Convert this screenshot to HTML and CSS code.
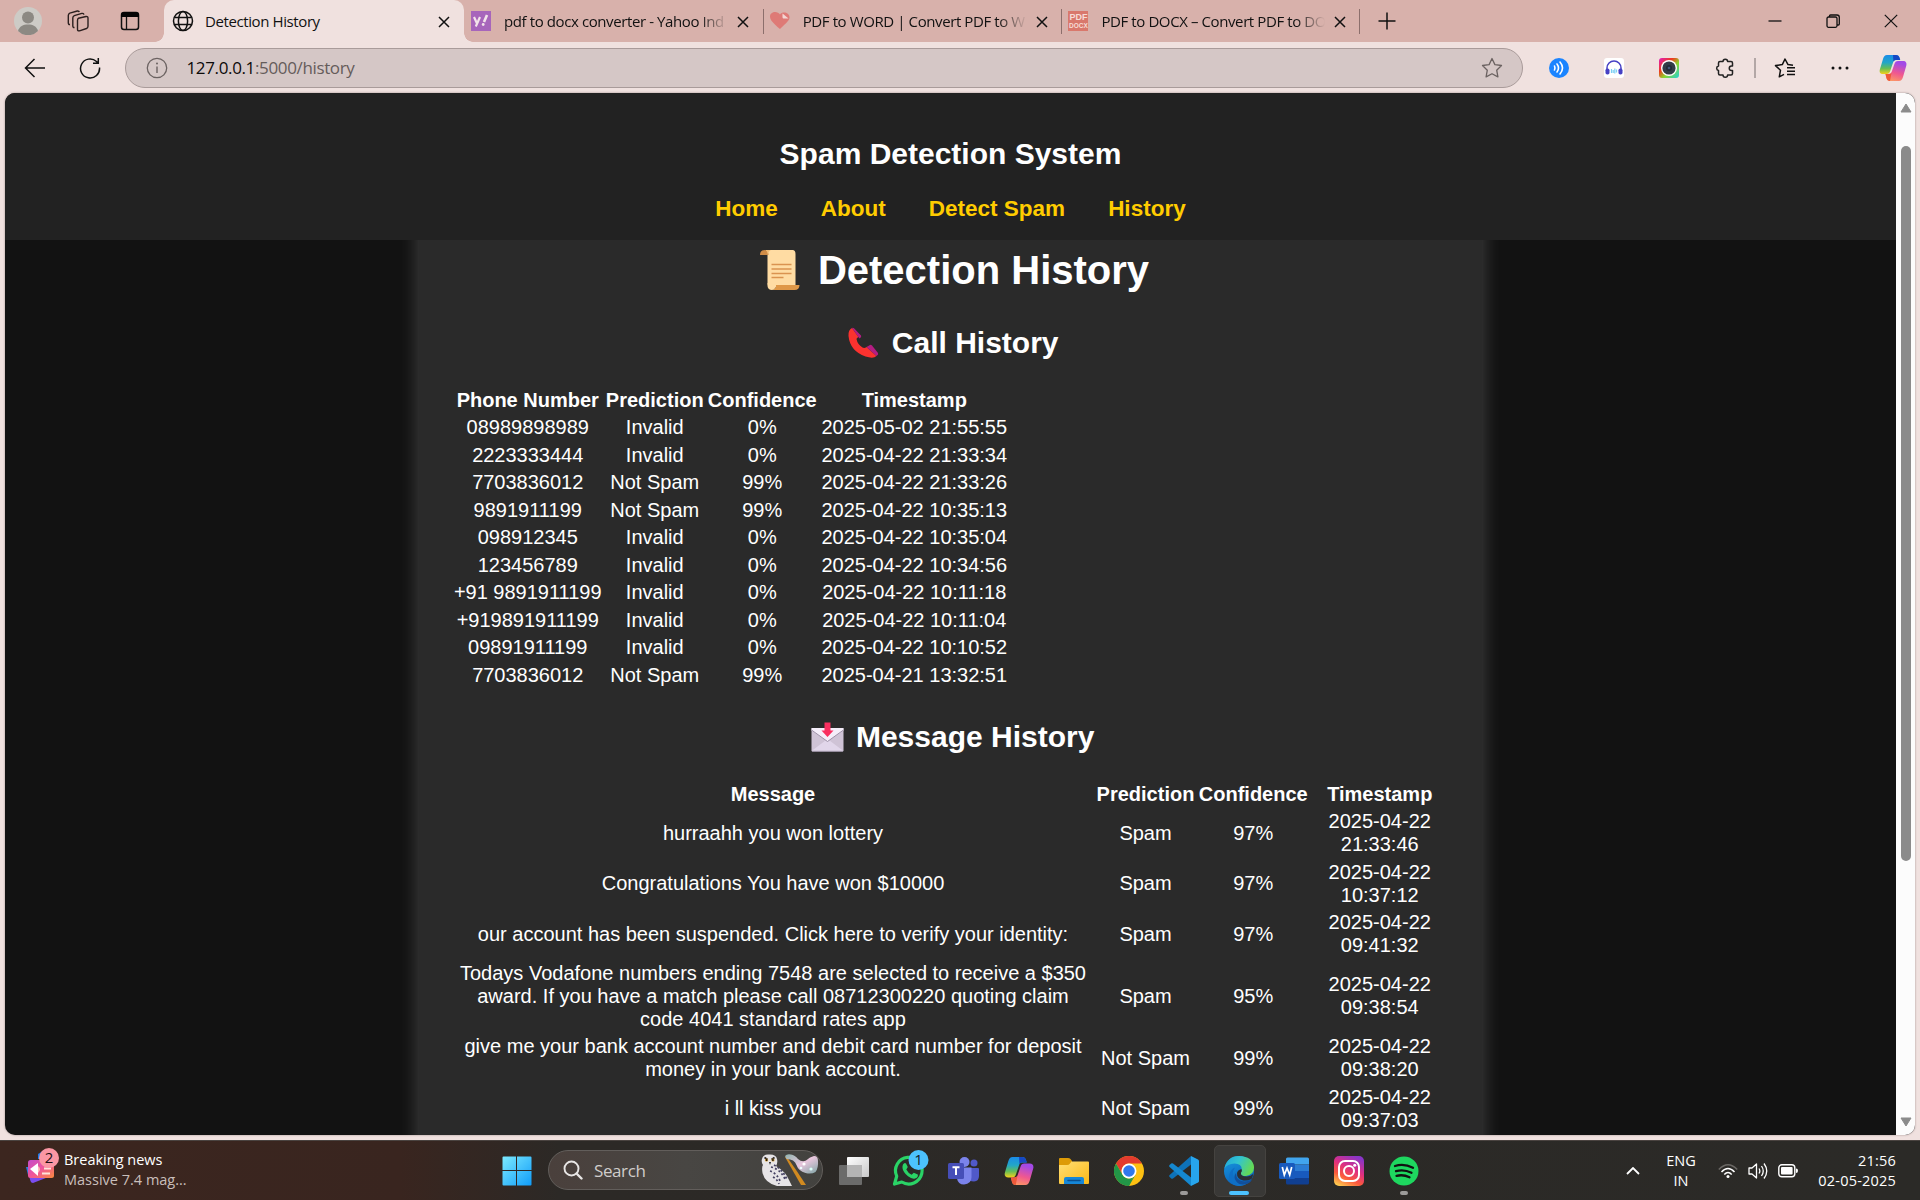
FILE: index.html
```html
<!DOCTYPE html>
<html lang="en">
<head>
<meta charset="utf-8">
<title>Detection History</title>
<link rel="stylesheet" href="styles.css">
</head>
<body>
<svg class="defs" width="0" height="0" aria-hidden="true">
  <defs>
    <linearGradient id="cpA" x1="0" y1="0" x2="0" y2="1"><stop offset="0" stop-color="#1a8be8"/><stop offset=".4" stop-color="#22a6c8"/><stop offset=".7" stop-color="#63bd58"/><stop offset="1" stop-color="#f3d11a"/></linearGradient>
    <linearGradient id="cpB" x1="0.3" y1="0" x2="0" y2="1"><stop offset="0" stop-color="#a349e6"/><stop offset=".5" stop-color="#f0588f"/><stop offset="1" stop-color="#ffa45c"/></linearGradient>
    <linearGradient id="igG" x1="0.7" y1="0" x2="0.2" y2="1"><stop offset="0" stop-color="#8a35c8"/><stop offset=".4" stop-color="#e02f80"/><stop offset=".7" stop-color="#fb5a3c"/><stop offset="1" stop-color="#fec94f"/></linearGradient>
    <linearGradient id="camG" x1="0" y1="0" x2="1" y2="1"><stop offset="0" stop-color="#e01cc0"/><stop offset=".35" stop-color="#ef3b1c"/><stop offset=".6" stop-color="#8bd62c"/><stop offset="1" stop-color="#1fd0dc"/></linearGradient>
    <linearGradient id="winG" x1="0" y1="0" x2="1" y2="1"><stop offset="0" stop-color="#7ceaff"/><stop offset="1" stop-color="#109cf8"/></linearGradient>
    <linearGradient id="fdG" x1="0" y1="0" x2="1" y2="1"><stop offset="0" stop-color="#ffdf76"/><stop offset="1" stop-color="#fbb915"/></linearGradient>
    <linearGradient id="edA" x1="0" y1="0" x2="1" y2=".4"><stop offset="0" stop-color="#1fa5dc"/><stop offset=".5" stop-color="#33c4cf"/><stop offset="1" stop-color="#63d957"/></linearGradient>
    <linearGradient id="edB" x1="0" y1="0" x2=".4" y2="1"><stop offset="0" stop-color="#199be0"/><stop offset="1" stop-color="#0a63bd"/></linearGradient>
    <linearGradient id="nwG" x1="0" y1="0" x2="1" y2="1"><stop offset="0" stop-color="#c34ccb"/><stop offset=".5" stop-color="#f0569a"/><stop offset="1" stop-color="#fb8a3c"/></linearGradient>
    <linearGradient id="tvG" x1="0" y1="0" x2="1" y2="1"><stop offset="0" stop-color="#ffffff"/><stop offset="1" stop-color="#c9c9c9"/></linearGradient>
    <linearGradient id="bbG" x1="0" y1="0" x2="1" y2="1"><stop offset="0" stop-color="#8fb3ad"/><stop offset=".5" stop-color="#e9c6dd"/><stop offset="1" stop-color="#7fa5a6"/></linearGradient>
    <symbol id="copilot" viewBox="0 0 28 28">
      <path d="M8 1h9c2 0 3 1 3.600 3l.6 2h-4c-2 0-2.700 1-3.300 3l-2.700 8c-.7 2-1.600 3-3.600 3H4c-3 0-4-2-3-5L4 5c.8-2.600 2-4 4-4z" fill="url(#cpA)"/>
      <path d="M14 1h3c2 0 3 1 3.600 3l.6 2h-4c-1.500 0-2.300.6-2.800 1.600z" fill="#1648c4"/>
      <path d="M20 27h-9c-2 0-3-1-3.600-3l-1-4h3c2 0 3-1 3.600-3l2.400-7c.7-2 1.600-3 3.600-3h5c3 0 4 2 3.200 5l-3.200 11c-.8 2.600-2 4-4 4z" fill="url(#cpB)"/>
      <path d="M6.600 20h3c1.600 0 2.400-.6 3-1.600L11 27c-2 0-3-1-3.600-3z" fill="#ee5a3a"/>
    </symbol>
    <symbol id="x" viewBox="0 0 12 12"><path d="M1 1l10 10M11 1L1 11" fill="none" stroke="#111" stroke-width="1.500"/></symbol>
  </defs>
</svg>

<div class="tabstrip">
  <div class="strip-btn avatar-btn"><svg width="28" height="28" viewBox="0 0 28 28"><circle cx="14" cy="14" r="14" fill="#cdcbc6"/><circle cx="14" cy="10.500" r="6" fill="#8c8983"/><path d="M4 24c1.500-5 5-6.500 10-6.500s8.500 1.500 10 6.500a14 14 0 0 1-20 0z" fill="#8c8983"/></svg></div>
  <div class="strip-btn spaces-btn"><svg width="22" height="22" viewBox="0 0 22 22" fill="none" stroke="#2b1f1e" stroke-width="1.400" stroke-linejoin="round"><path d="M11.500 8.200l7.500-1.700q2-.2 2 1.800v8q0 1.600-1.500 2.200l-7 2.300q-2 .4-2-1.600V10.500q0-1.700 1-2.300z"/><path d="M7.500 17.500q-1.700.2-1.700-1.800V8q0-1.700 1.500-2.300l7.500-2.300q1.900-.3 2.100 1.300M3 14.500q-1.700.2-1.700-1.800V5.500Q1.300 3.800 2.800 3.200L10.300 1q1.700-.2 2 1"/></svg></div>
  <div class="strip-btn panel-btn"><svg width="20" height="20" viewBox="0 0 20 20"><rect x="1.500" y="1.500" width="17" height="17" rx="2.500" fill="none" stroke="#111" stroke-width="1.500"/><path d="M1 3.500A3 3 0 0 1 4 1h12a3 3 0 0 1 3 2.500V6H1z" fill="#050505"/><path d="M6.500 6v12" stroke="#111" stroke-width="1.300"/></svg></div>

  <div class="tab active">
    <span class="tab-icon"><svg width="22" height="22" viewBox="0 0 22 22" fill="none" stroke="#111" stroke-width="1.500"><circle cx="11" cy="11" r="9.500"/><ellipse cx="11" cy="11" rx="4.600" ry="9.500"/><path d="M2.300 7.500h17.400M2.300 14.500h17.400"/></svg></span>
    <span class="tab-title">Detection History</span>
    <svg class="tab-x" width="12" height="12"><use href="#x"/></svg>
  </div>
  <div class="tab">
    <span class="tab-icon"><svg width="20" height="20" viewBox="0 0 20 20"><rect width="20" height="20" fill="#a765bb"/><path d="M3 6l3 6.500M9 6L4.800 15.500" stroke="#f3e3ea" stroke-width="2.200" fill="none"/><path d="M16 4l-3 7" stroke="#f3e3ea" stroke-width="2.600"/><circle cx="12.200" cy="13.500" r="1.400" fill="#f3e3ea"/></svg></span>
    <span class="tab-title fade">pdf to docx converter - Yahoo Ind</span>
    <svg class="tab-x" width="12" height="12"><use href="#x"/></svg>
  </div>
  <div class="tab divided">
    <span class="tab-icon"><svg width="20" height="20" viewBox="0 0 20 20"><path d="M10 18C3 12 0 9 0 5.500 0 0 8-.5 10 3.500 12.500 0 20 1.500 19.500 7 19 10 14 14 10 18z" fill="#de7a76"/><path d="M12.500 2.500l6 5h-4.500c-1 0-1.500-.5-1.500-1.500z" fill="#f3d7d4"/></svg></span>
    <span class="tab-title fade">PDF to WORD | Convert PDF to W</span>
    <svg class="tab-x" width="12" height="12"><use href="#x"/></svg>
  </div>
  <div class="tab divided last">
    <span class="tab-icon pdf-icon"><b>PDF</b><b class="small">DOCX</b></span>
    <span class="tab-title fade">PDF to DOCX – Convert PDF to DO</span>
    <svg class="tab-x" width="12" height="12"><use href="#x"/></svg>
  </div>
  <div class="new-tab"><svg width="18" height="18" viewBox="0 0 18 18"><path d="M9 .5v17M.5 9h17" stroke="#111" stroke-width="1.500"/></svg></div>
  <div class="window-btns">
    <svg width="14" height="14" viewBox="0 0 14 14"><path d="M.5 7h13" stroke="#111" stroke-width="1.300"/></svg>
    <svg width="14" height="14" viewBox="0 0 14 14" fill="none" stroke="#111" stroke-width="1.300"><rect x="1" y="3" width="10" height="10.300" rx="1.500"/><path d="M3.500 3V2c0-.6.400-1 1-1H11c1.300 0 2.300 1 2.300 2.300V10c0 .6-.4 1-1 1H11"/></svg>
    <svg width="14" height="14" viewBox="0 0 14 14"><path d="M.8.8l12.400 12.400M13.200.8L.8 13.200" stroke="#111" stroke-width="1.200"/></svg>
  </div>
</div>

<div class="toolbar">
  <div class="nav-btn back"><svg width="22" height="20" viewBox="0 0 22 20" fill="none" stroke="#111" stroke-width="1.500"><path d="M21 10H1.500M10.500 1l-9 9 9 9"/></svg></div>
  <div class="nav-btn reload"><svg width="22" height="22" viewBox="0 0 22 22" fill="none" stroke="#111" stroke-width="1.500"><path d="M20.500 10.500A9.500 9.500 0 1 1 17.500 4.500L19 6M19.300 1v5.300H14"/></svg></div>
  <div class="address">
    <svg width="22" height="22" viewBox="0 0 22 22"><circle cx="11" cy="11" r="9.700" fill="none" stroke="#6b6261" stroke-width="1.300"/><path d="M11 9.500v6.500" stroke="#6b6261" stroke-width="1.400"/><circle cx="11" cy="6.500" r="1" fill="#6b6261"/></svg>
    <span class="url"><span class="host">127.0.0.1</span>:5000/history</span>
    <svg class="star" width="22" height="22" viewBox="0 0 22 22"><path d="M11 1.500l2.900 6.100 6.600.9-4.800 4.700 1.200 6.700L11 16.700l-5.900 3.200 1.200-6.700L1.500 8.500l6.600-.9z" fill="none" stroke="#6b6261" stroke-width="1.300" stroke-linejoin="round"/></svg>
  </div>
  <div class="ext"><svg width="20" height="20" viewBox="0 0 20 20"><circle cx="10" cy="10" r="10" fill="#1b84ff"/><path d="M5.500 8q1 2 0 4M8 6q3 4 0 8M11 4q5 6 0 12" fill="none" stroke="#fff" stroke-width="1.600" stroke-linecap="round"/></svg></div>
  <div class="ext"><svg width="20" height="20" viewBox="0 0 20 20"><rect width="20" height="20" rx="3" fill="#fff"/><path d="M3 13V10a7 7 0 0 1 14 0v3" fill="none" stroke="#4640c4" stroke-width="1.500"/><rect x="1.500" y="10.500" width="4" height="6" rx="1.800" fill="#4640c4"/><rect x="14.500" y="10.500" width="4" height="6" rx="1.800" fill="#4640c4"/><path d="M7.500 11v4M9.200 12v3M10.800 10.500v5M12.500 11.500v3" stroke="#7cd0f5" stroke-width="1.200"/></svg></div>
  <div class="ext"><svg width="20" height="20" viewBox="0 0 20 20"><rect width="20" height="20" rx="3" fill="url(#camG)"/><circle cx="10" cy="10" r="8" fill="#fff"/><circle cx="10" cy="10" r="6.600" fill="#333c48"/><circle cx="10" cy="10" r="3" fill="#222b38"/><circle cx="10" cy="10" r="1.300" fill="#43597a"/></svg></div>
  <div class="ext"><svg width="22" height="22" viewBox="0 0 22 22"><path d="M6 4.500h3a2.300 2.300 0 0 1 4.600 0H17q1.500 0 1.500 1.500v3h-1a2.200 2.200 0 0 0 0 4.500h1v3q0 1.500-1.500 1.500h-3.400a2.300 2.300 0 0 1-4.600 0H6q-1.500 0-1.500-1.500v-3a2.300 2.300 0 0 1 0-4.500V6Q4.500 4.500 6 4.500z" fill="none" stroke="#222" stroke-width="1.500" stroke-linejoin="round"/></svg></div>
  <div class="tool-sep"></div>
  <div class="fav"><svg width="22" height="20" viewBox="0 0 22 20" fill="none" stroke="#111" stroke-width="1.500" stroke-linejoin="round"><path d="M19 7.200l-5-.6L11 1 8.300 6.600l-6.800 1 5 4.600-1.200 6.600 4.700-2.500M13 9.800h8M13 13.200h8M13 16.600h8"/></svg></div>
  <div class="more"><svg width="18" height="4" viewBox="0 0 18 4" fill="#111"><circle cx="2" cy="2" r="1.500"/><circle cx="9" cy="2" r="1.500"/><circle cx="16" cy="2" r="1.500"/></svg></div>
  <div class="side-copilot"><svg width="28" height="28"><use href="#copilot"/></svg></div>
</div>

<div class="viewport">
  <div class="page">
    <header class="site-header">
      <h2 class="brand">Spam Detection System</h2>
      <nav class="links"><a>Home</a><a>About</a><a>Detect Spam</a><a>History</a></nav>
    </header>
    <main class="card">
      <h1 class="title"><svg width="55" height="46" viewBox="0 0 55 46"><path d="M13.500 3h27q3 0 3 4v33H19q-3.500 0-3.500-4V8z" fill="#ffdca3"/><path d="M8 8q0-5 5-5 3.500.5 3.500 5z" fill="#d08c47"/><path d="M14 3h5q-3 1-3 5-1-4-2-5z" fill="#f2bd78"/><path d="M24 38h23.500q0 5-5 5H20q4-1 4-5z" fill="#df9848"/><path d="M15.500 36v3q.5 4 4.500 4 4-.8 4-5z" fill="#ffdca3"/><path d="M19.500 17.500h20M19.500 22h20M19.500 26.500h20M19.500 30.500h12" stroke="#da9350" stroke-width="1.500"/></svg> Detection History</h1>
      <h2 class="section"><svg width="41" height="34" viewBox="-1.500 0 41 34"><path d="M8.500 2q-4 2-3.500 8 1.500 15 17 20.500 8 2.500 11-.5l-10-9q-2 1.500-4 .5-5-3-6-8.500 0-1 2-2z" fill="#fb322f"/><path d="M8.500 2q1-.8 2 .3l7 7.200q1 1.500-1.500 3z" fill="#b41d83"/><path d="M23 21l3.500-2q1-.5 2 .5l6 7.500q1 1.500-1.500 3z" fill="#b41d83"/></svg> Call History</h2>
      <table class="calls">
        <colgroup><col class="c-phone"><col class="c-pred"><col class="c-conf"><col class="c-time"></colgroup>
        <tr><th>Phone Number</th><th>Prediction</th><th>Confidence</th><th>Timestamp</th></tr>
        <tr><td>08989898989</td><td>Invalid</td><td>0%</td><td>2025-05-02 21:55:55</td></tr>
        <tr><td>2223333444</td><td>Invalid</td><td>0%</td><td>2025-04-22 21:33:34</td></tr>
        <tr><td>7703836012</td><td>Not Spam</td><td>99%</td><td>2025-04-22 21:33:26</td></tr>
        <tr><td>9891911199</td><td>Not Spam</td><td>99%</td><td>2025-04-22 10:35:13</td></tr>
        <tr><td>098912345</td><td>Invalid</td><td>0%</td><td>2025-04-22 10:35:04</td></tr>
        <tr><td>123456789</td><td>Invalid</td><td>0%</td><td>2025-04-22 10:34:56</td></tr>
        <tr><td>+91 9891911199</td><td>Invalid</td><td>0%</td><td>2025-04-22 10:11:18</td></tr>
        <tr><td>+919891911199</td><td>Invalid</td><td>0%</td><td>2025-04-22 10:11:04</td></tr>
        <tr><td>09891911199</td><td>Invalid</td><td>0%</td><td>2025-04-22 10:10:52</td></tr>
        <tr><td>7703836012</td><td>Not Spam</td><td>99%</td><td>2025-04-21 13:32:51</td></tr>
      </table>
      <h2 class="section second"><svg width="41" height="34" viewBox="0 0 41 34"><rect x="4.500" y="8" width="32" height="23.500" rx="1" fill="#cfc3d6"/><path d="M4.500 31l16-12 16 12z" fill="#e1d6ea"/><path d="M4.500 8h32v2.500l-16 11-16-11z" fill="#f5eefa"/><path d="M4.500 10l16 11.500 16-11.500" fill="none" stroke="#9c8fa6" stroke-width="1"/><path d="M5 31.300h31" stroke="#9d93a5"/><path d="M17.500 2.500h6v8h3L20.500 17l-6-6.500h3z" fill="#f92f60"/></svg> Message History</h2>
      <table class="messages">
        <colgroup><col class="c-msg"><col class="c-pred"><col class="c-conf"><col class="c-time"></colgroup>
        <tr><th>Message</th><th>Prediction</th><th>Confidence</th><th>Timestamp</th></tr>
        <tr><td>hurraahh you won lottery</td><td>Spam</td><td>97%</td><td>2025-04-22 21:33:46</td></tr>
        <tr><td>Congratulations You have won $10000</td><td>Spam</td><td>97%</td><td>2025-04-22 10:37:12</td></tr>
        <tr><td>our account has been suspended. Click here to verify your identity:</td><td>Spam</td><td>97%</td><td>2025-04-22 09:41:32</td></tr>
        <tr><td>Todays Vodafone numbers ending 7548 are selected to receive a $350 award. If you have a match please call 08712300220 quoting claim code 4041 standard rates app</td><td>Spam</td><td>95%</td><td>2025-04-22 09:38:54</td></tr>
        <tr><td>give me your bank account number and debit card number for deposit money in your bank account.</td><td>Not Spam</td><td>99%</td><td>2025-04-22 09:38:20</td></tr>
        <tr><td>i ll kiss you</td><td>Not Spam</td><td>99%</td><td>2025-04-22 09:37:03</td></tr>
      </table>
    </main>
  </div>
  <div class="scrollbar">
    <svg width="12" height="10" viewBox="0 0 12 10"><path d="M6 1l5 8H1z" fill="#8b8b8b" stroke="#8b8b8b" stroke-linejoin="round"/></svg>
    <div class="thumb"></div>
    <svg width="12" height="10" viewBox="0 0 12 10"><path d="M6 9l5-8H1z" fill="#8b8b8b" stroke="#8b8b8b" stroke-linejoin="round"/></svg>
  </div>
</div>

<div class="taskbar">
  <div class="widget">
    <svg width="36" height="40" viewBox="0 0 36 40"><path d="M2 21h6v9l-4-1z" fill="#2d7de0"/><path d="M14 8l8-5v10h-8z" fill="#1d7bea"/><path d="M5 30h22L9 37q-2 0-2.500-2z" fill="#7b4df0"/><rect x="4" y="14" width="26" height="18" rx="2.500" fill="url(#nwG)"/><path d="M6 23l8-6v13z" fill="#fff"/><path d="M14 20q4 3 0 7z" fill="#fbb"/><path d="M20 22.500h7M18 27.500h8" stroke="#ffe3da" stroke-width="1.800"/><circle cx="25" cy="12" r="10" fill="#fb97a4"/><text class="badge" x="25" y="17.200" text-anchor="middle" fill="#1c1013">2</text></svg>
    <div class="news"><span>Breaking news</span><span class="dim">Massive 7.4 mag...</span></div>
  </div>
  <div class="apps">
    <div class="app"><svg width="30" height="30" viewBox="0 0 30 30" fill="url(#winG)"><path d="M.5 1.500q0-1 1-1H14V14H.5zM15 .500h13.500q1 0 1 1V14H15zM.5 15H14v14.500H1.500q-1 0-1-1zM15 15h14.500v13.500q0 1-1 1H15z"/></svg></div>
    <div class="search">
      <svg width="20" height="20" viewBox="0 0 20 20" fill="none" stroke="#e8e6e5" stroke-width="1.900"><circle cx="8.500" cy="8.500" r="7"/><path d="M13.500 13.500l5 5" stroke-width="2.400" stroke-linecap="round"/></svg>
      <span>Search</span>
      <svg class="art" width="58" height="34" viewBox="0 0 58 34"><path d="M1 6Q2 1 8 1.500 15 1 16 6q1 4-1 7 10 6 13 14l3 6H16Q4 30 1.500 20 .5 14 2 12 0 9 1 6z" fill="#e6e4e6"/><path d="M10 14q9 2 14 12M9 18q7 2 11 12M12 24q4 2 6 7M13 12q8 4 13 14" stroke="#454162" stroke-width="1.700" stroke-dasharray="2 2.200" fill="none"/><path d="M3.500 4.500l3 2M13.500 4.500l-3 2" stroke="#1d1a1e" stroke-width="1.600"/><circle cx="5.500" cy="7" r="1.600" fill="#d39a2c"/><circle cx="12" cy="7" r="1.600" fill="#d39a2c"/><circle cx="5.600" cy="7" r=".9" fill="#111"/><circle cx="11.900" cy="7" r=".9" fill="#111"/><path d="M8 9h2l-1 3z" fill="#222"/><path d="M24 4l16 28h5Q36 18 26 4z" fill="#d28a20"/><path d="M24 3q2-2.500 6-1.500 4 .5 7 4.500 4 3.500 8 1.500 4-4 8-4.500 4 0 4 5 .5 7-2.500 11-4 2.500-10 1-7-2-9-8-2-6-10-6z" fill="url(#bbG)"/><circle cx="43" cy="11" r="1.600" fill="#fff"/><circle cx="40" cy="15" r="1.300" fill="#effcff"/><circle cx="50" cy="16" r="1.600" fill="#d9fff7"/></svg>
    </div>
    <div class="app"><svg width="32" height="30" viewBox="0 0 32 30"><rect x="9" y="1" width="22" height="20" rx="1" fill="url(#tvG)"/><rect x="1" y="9" width="23" height="20" rx="1" fill="#777" fill-opacity=".85"/><path d="M9 9h15v12H9z" fill="#b4b4b4"/></svg></div>
    <div class="app wide"><svg width="40" height="42" viewBox="0 0 40 42"><path d="M5.500 35l2.200-7.800A13.300 13.300 0 1 1 12.800 33z" fill="#2a2b28" stroke="#2ad366" stroke-width="3.200" stroke-linejoin="round"/><path d="M14 15.500q1.500-2.500 3-1l1.800 3.600-1.500 2.400q2 3.800 5.300 5.200l2.200-2 4 1.800q.7 3-2.800 4-3 .8-7-2.200-5-4-5.500-8.300-.2-2 .5-3.500z" fill="#2ad366"/><circle cx="29.500" cy="11" r="10" fill="#4cc2ff"/><text class="badge" x="29.500" y="16.200" text-anchor="middle" fill="#10202a">1</text></svg></div>
    <div class="app"><svg width="32" height="30" viewBox="0 0 32 30"><circle cx="16.500" cy="6" r="5" fill="#7b83eb"/><circle cx="26" cy="7" r="3.500" fill="#5059c9"/><path d="M22 12h8q1 0 1 1v7q0 5-5 5.500-3 0-4-1z" fill="#5059c9"/><path d="M9 11.500h14.500V21q0 7-7.500 7.500-6 0-7-6z" fill="#7b83eb"/><rect x="0" y="7" width="16" height="16" rx="1.500" fill="#464eb8"/><path d="M4.500 11.300h7M8 11.300V19" stroke="#fff" stroke-width="2"/></svg></div>
    <div class="app"><svg width="30" height="30"><use href="#copilot"/></svg></div>
    <div class="app"><svg width="32" height="30" viewBox="0 0 32 30"><path d="M1 2.500Q1 2 2 2h8q1.500 0 2.500 1L14 5v4H1z" fill="#dd9b07"/><path d="M1 9h8q2 0 3-1.500L13.500 5.500H30q1 0 1 1V27q0 1-1 1H2q-1 0-1-1z" fill="url(#fdG)"/><path d="M6 28v-5q0-2 2-2h16q2 0 2 2v5z" fill="#1687d8"/><path d="M10 24.500h12" stroke="#0a4f8f" stroke-width="1.500" stroke-linecap="round"/></svg></div>
    <div class="app"><svg width="30" height="30" viewBox="0 0 30 30"><circle cx="15" cy="15" r="15" fill="#fdc012"/><path d="M2 7.500A15 15 0 0 1 28 7.500H15a7.500 7.500 0 0 0-6.500 11.200z" fill="#e33b2e"/><path d="M2 7.500l6.500 11.200A7.500 7.500 0 0 0 18.500 21.600L15 30A15 15 0 0 1 2 7.500z" fill="#229647"/><path d="M21.500 18.700L15 30a15 15 0 0 1-3-.5z" fill="#229647"/><circle cx="15" cy="15" r="7.500" fill="#fff"/><circle cx="15" cy="15" r="5.800" fill="#3078ec"/></svg></div>
    <div class="app open"><svg width="30" height="30" viewBox="0 0 30 30"><path d="M22 0l7 3.500q1 .5 1 1.500v20q0 1-1 1.500L22 30z" fill="#27a5ed"/><path d="M22 0v8.500L4 22.500q-1 .5-1.800 0L.6 21q-1-1 0-2z" fill="#0e72b8"/><path d="M22 30v-8.500L4 7.500q-1-.5-1.800 0L.6 9q-1 1 0 2z" fill="#1588d0"/></svg></div>
    <div class="app open current"><svg width="30" height="30" viewBox="0 0 30 30"><circle cx="15" cy="15" r="15" fill="url(#edB)"/><path d="M.5 12.500Q3 0 15 0q14 .5 15 11 .3 8-8 9-6 0-5-3.500Q20 8 10.500 7.500 3 8 .5 12.500z" fill="url(#edA)"/><path d="M11 11.500q-5 7 1 13.500 6 5 13 1-5 4.500-11 4Q3 28 5.500 18 7 13 11 11.500z" fill="#0f6fc5"/><path d="M12 17q0 8 8 8.500 4 .2 8-2-1 2-3 3.500-9 4-13-2-3-4 0-8z" fill="#124f9a"/><path d="M17.500 13q1 2-.5 3.800-1 3.500 6 3.700 4-.2 6-2.500.3 2-1.500 5-4 2-8 1.500-7-1.500-6.500-7.500.5-3 4.500-4z" fill="#2c2f33"/></svg></div>
    <div class="app"><svg width="30" height="30" viewBox="0 0 30 30"><path d="M7 3q0-1.500 1.500-1.500h20Q30 1.500 30 3v5.500H7z" fill="#41a5ee"/><path d="M7 8.500h23V15H7z" fill="#2b7cd3"/><path d="M7 15h23v7H7z" fill="#185abd"/><path d="M7 22h23v5q0 1.500-1.500 1.500h-20Q7 28.500 7 27z" fill="#103f91"/><rect x="0" y="7" width="16" height="16" rx="1.500" fill="#185abd"/><path d="M3.300 11l2 8L8 12l2.700 7 2-8" stroke="#fff" stroke-width="1.700" fill="none"/></svg></div>
    <div class="app"><svg width="30" height="30" viewBox="0 0 30 30"><rect width="30" height="30" rx="5" fill="url(#igG)"/><rect x="5" y="5" width="20" height="20" rx="6" fill="none" stroke="#fff" stroke-width="2"/><circle cx="15" cy="15" r="5" fill="none" stroke="#fff" stroke-width="2"/><circle cx="20.700" cy="9.300" r="1.500" fill="#fff"/></svg></div>
    <div class="app open"><svg width="30" height="30" viewBox="0 0 30 30"><circle cx="15" cy="15" r="14.500" fill="#1ed75f"/><path d="M6 10q9-2.800 18 1.800M7 15.200q8-2.200 15.500 1.600M7.500 19.800q7-1.600 13 1.500" fill="none" stroke="#111" stroke-width="2.300" stroke-linecap="round"/></svg></div>
  </div>
  <div class="tray">
    <svg class="caret" width="14" height="8" viewBox="0 0 14 8"><path d="M1 7l6-6 6 6" fill="none" stroke="#fff" stroke-width="1.800"/></svg>
    <div class="lang"><span>ENG</span><span>IN</span></div>
    <svg class="wifi" width="20" height="16" viewBox="0 0 20 16" fill="none" stroke="#fff" stroke-width="1.500"><path d="M.8 6.500Q10-3 19.200 6.500" stroke="#6b6865"/><path d="M3.500 9Q10 2 16.500 9M6.300 11.500q3.700-4 7.400 0"/><circle cx="10" cy="13.500" r="1.500" fill="#fff" stroke="none"/></svg>
    <svg class="vol" width="20" height="18" viewBox="0 0 20 18" fill="none" stroke="#fff" stroke-width="1.300"><path d="M1 6h3l4.500-4v14L4 12H1z" stroke-linejoin="round"/><path d="M11 6.500q1.700 2.500 0 5M13.500 4q3.500 5 0 10M16 1.500q5.500 7.500 0 15"/></svg>
    <svg class="batt" width="20" height="14" viewBox="0 0 20 14"><rect x=".8" y=".8" width="16" height="12" rx="3" fill="none" stroke="#fff" stroke-width="1.400"/><rect x="3" y="3" width="11.600" height="7.600" rx="1" fill="#fff"/><path d="M18 4.500q2 0 2 2.300t-2 2.300z" fill="#fff"/></svg>
    <div class="clock"><span>21:56</span><span>02-05-2025</span></div>
  </div>
</div>
</body>
</html>
```
FILE: styles.css
```css
* { box-sizing: border-box; }
body {
  margin: 0;
  width: 1920px;
  height: 1200px;
  overflow: hidden;
  display: flex;
  flex-direction: column;
  background: #f0e1df;
  font-family: "Open Sans", "Noto Sans", sans-serif;
  color: #111;
}
svg { display: block; flex: none; }
.defs { position: absolute; }

/* Tab strip */
.tabstrip {
  display: flex;
  height: 42px;
  flex: none;
  background: #d8b1ab;
  align-items: stretch;
}
.strip-btn { display: flex; align-items: center; justify-content: center; }
.avatar-btn { width: 56px; }
.spaces-btn { width: 44px; }
.panel-btn { width: 64px; padding-right: 4px; }
.tab {
  display: flex;
  align-items: center;
  width: 298.700px;
  padding-left: 7px;
  flex: none;
  position: relative;
}
.tab.active {
  width: 300px;
  padding-left: 8px;
  background: #f0e1df;
  border-radius: 10px 10px 0 0;
}
.tab.active::before, .tab.active::after {
  content: "";
  position: absolute;
  bottom: 0;
  width: 9px;
  height: 9px;
}
.tab.active::before { left: -9px; background: radial-gradient(circle at 0 0, #d8b1ab 8.500px, #f0e1df 9px); }
.tab.active::after { right: -9px; background: radial-gradient(circle at 100% 0, #d8b1ab 8.500px, #f0e1df 9px); z-index: 1; }
.tab.divided { background: linear-gradient(#8c6f6c, #8c6f6c) no-repeat 0 9px / 1px 25px; }
.tab.last { background: linear-gradient(#8c6f6c, #8c6f6c) no-repeat 0 9px / 1px 25px, linear-gradient(#8c6f6c, #8c6f6c) no-repeat 100% 9px / 1px 25px; }
.tab-icon { width: 22px; margin-right: 11px; flex: none; }
.tab-title {
  width: 228px;
  margin-right: 5px;
  white-space: nowrap;
  font-size: 15px;
  line-height: 20px;
  letter-spacing: -.4px;
}
.fade {
  -webkit-mask-image: linear-gradient(90deg, #000 195px, transparent 224px);
  mask-image: linear-gradient(90deg, #000 195px, transparent 224px);
}
.tab-x { margin-top: 1px; }
.pdf-icon {
  width: 20px;
  height: 20px;
  margin-right: 13px;
  background: #d9786c;
  color: #f6dcd6;
  display: flex;
  flex-direction: column;
  align-items: center;
  justify-content: center;
  font: bold 9px/9px "Liberation Sans", sans-serif;
}
.pdf-icon .small { font-size: 6.500px; line-height: 8px; }
.new-tab { width: 54px; display: flex; align-items: center; justify-content: center; }
.window-btns { margin-left: auto; display: flex; align-items: center; gap: 44px; padding-right: 22px; }

/* Toolbar */
.toolbar { display: flex; height: 51px; flex: none; align-items: center; }
.nav-btn { display: flex; justify-content: center; }
.back { width: 70px; }
.reload { width: 40px; margin-right: 15px; }
.address {
  width: 1398px;
  height: 40px;
  border: 1px solid #a99b9a;
  border-radius: 20px;
  background: #d5c7c6;
  display: flex;
  align-items: center;
  padding: 0 19px 0 20px;
}
.url { margin-left: 18.500px; font-size: 17px; letter-spacing: -.36px; color: #655c5b; }
.host { color: #0c0a0a; }
.star { margin-left: auto; }
.ext { width: 55.300px; display: flex; justify-content: center; }
.address + .ext { margin-left: 8px; }
.tool-sep { width: 2px; height: 20px; background: #b3a7a6; margin-left: 2px; }
.fav { width: 58px; display: flex; justify-content: center; }
.more { width: 52px; display: flex; justify-content: center; }
.side-copilot { width: 53px; display: flex; justify-content: center; }

/* Page area */
.viewport {
  display: flex;
  width: 1910px;
  height: 1042px;
  margin: 0 0 5px 5px;
  flex: none;
  border-radius: 10px;
  overflow: hidden;
  background: #121212;
  box-shadow: 0 0 2px rgba(60, 40, 40, .5);
}
.page {
  width: 1891px;
  height: 1042px;
  overflow: hidden;
  color: #fff;
  font-family: "Liberation Sans", Arial, sans-serif;
  font-size: 20px;
}
.site-header {
  position: relative;
  z-index: 1;
  height: 147px;
  padding-top: 43.600px;
  background: #222;
  text-align: center;
}
.brand { margin: 0 0 25.500px; font-size: 30px; line-height: 34px; }
.links { display: flex; justify-content: center; gap: 43px; font-size: 22.500px; line-height: 26px; font-weight: bold; color: #ffcc00; }
.card {
  width: 1063px;
  height: 1140px;
  margin: -40px auto 0;
  padding: 47px 31.500px 0;
  background: #2a2a2a;
  box-shadow: 0 0 18.750px rgba(255, 255, 255, .22);
}
.title, .section { display: flex; justify-content: center; margin: 0; }
.title { font-size: 40px; line-height: 46px; gap: 11px; margin-bottom: 32.700px; }
.section { font-size: 30px; line-height: 34px; gap: 8.300px; margin-bottom: 25.600px; }
.section.second { margin-top: 29.900px; }
table { table-layout: fixed; border-collapse: separate; border-spacing: 2px; text-align: center; line-height: 23px; }
th, td { padding: 1.250px 0; white-space: normal; }
.calls { width: 560px; }
.calls .c-phone { width: 150.500px; }
.calls .c-pred { width: 99.500px; }
.calls .c-conf { width: 111.500px; }
.messages { width: 1000px; }
.messages td:first-child { padding: 1.250px 3px; }
.messages .c-msg { width: 641px; }
.messages .c-pred { width: 100px; }
.messages .c-conf { width: 111.500px; }

.scrollbar {
  width: 19px;
  background: #fcfcfc;
  display: flex;
  flex-direction: column;
  align-items: center;
  padding: 10px 0 8px;
}
.thumb { width: 10px; height: 715px; margin: 33px 0 auto; border-radius: 5px; background: #8b8b8b; }

/* Taskbar */
.taskbar {
  display: flex;
  height: 60px;
  flex: none;
  border-top: 1px solid #4a4340;
  background: linear-gradient(90deg, #3c261f 0, #39251f 400px, #2c2926 560px, #2b2a27 100%);
  color: #fff;
}
.widget { display: flex; width: 489px; padding-left: 24px; gap: 4px; }
.widget svg { margin-top: 5px; }
.badge { font-size: 15px; }
.news { display: flex; flex-direction: column; font-size: 14.500px; line-height: 20px; padding-top: 9px; }
.dim { color: #c9bfbb; }
.apps { display: flex; align-items: stretch; }
.app {
  width: 55px;
  display: flex;
  align-items: center;
  justify-content: center;
  position: relative;
}
.wide svg { margin-top: -2px; }
.search {
  width: 275px;
  height: 40px;
  margin: 9px 3px 0 4px;
  border: 1px solid #625e5b;
  border-radius: 20px;
  background: linear-gradient(90deg, #4a403c, #484643 50%, #43423f);
  display: flex;
  align-items: center;
  padding: 0 3px 0 14px;
  font-size: 17px;
  color: #d0cdcb;
}
.search span { margin-left: 11px; letter-spacing: -.4px; }
.art { margin-left: auto; }
.open::after {
  content: "";
  position: absolute;
  bottom: 5px;
  left: 23.500px;
  width: 8px;
  height: 4px;
  border-radius: 2px;
  background: #9c9a99;
}
.current::before {
  content: "";
  position: absolute;
  left: 2.500px;
  top: 4px;
  width: 50px;
  height: 50px;
  border: 1px solid #454340;
  border-radius: 5px;
  background: #393836;
}
.current svg { position: relative; }
.current::after { left: 17.500px; width: 20px; background: #4cc2ff; }
.tray { margin-left: auto; display: flex; align-items: center; padding-right: 24px; font-size: 14.500px; line-height: 20px; }
.lang { display: flex; flex-direction: column; align-items: center; width: 40px; margin-left: 21px; }
.wifi { margin-left: 17px; }
.vol { margin-left: 10px; }
.batt { margin-left: 10px; }
.clock { display: flex; flex-direction: column; width: 98px; text-align: right; letter-spacing: .2px; }
```
